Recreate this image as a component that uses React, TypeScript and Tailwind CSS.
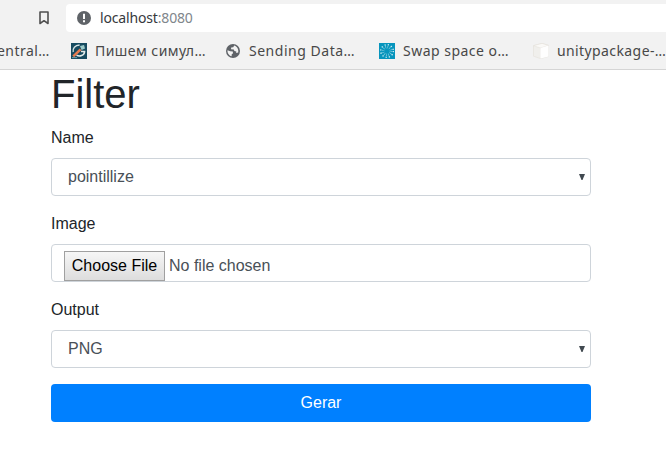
import React from 'react';

const GlobeIcon = () => (
  <svg width="14" height="14" viewBox="0 0 14 14">
    <circle cx="7" cy="7" r="7" fill="#5f6368" />
    <path d="M8.3 1.5 L7.2 3.2 L5.2 3.6 L5 5.2 L7.8 5.4 L8.4 7 L10.3 7.4 L10.2 9 L12.2 8.6 C12.8 6 11.6 2.6 8.3 1.5 Z" fill="#f2f2f2" />
    <path d="M1.5 6.3 L4.2 7.2 L6.8 7.4 L7 9.4 L5.8 10 L5.6 12.3 C3 11.7 1.2 9 1.5 6.3 Z" fill="#f2f2f2" />
  </svg>
);

const ToolIcon = () => (
  <svg width="16" height="16" viewBox="0 0 16 16">
    <rect width="16" height="16" fill="#174b60" />
    <path d="M8.6 2 C4 2.2 1.4 5.4 2.2 9" fill="none" stroke="#d9e4e4" strokeWidth="1.3" />
    <path d="M5.5 12.2 C8.5 14 13.4 12.6 13.6 8.6 H10" fill="none" stroke="#e4ecea" strokeWidth="1.5" />
    <path d="M2.2 13.4 L9.6 6.4" stroke="#e77b4f" strokeWidth="2.5" />
    <path d="M9 3 L13 2 L14 5.6 L10.6 7 Z" fill="#9ccac8" />
    <path d="M1 14.6 H6" stroke="#8cb2b8" strokeWidth=".8" />
  </svg>
);

const BurstIcon = () => (
  <svg width="16" height="16" viewBox="0 0 16 16">
    <rect width="16" height="16" fill="#0795bd" />
    <g fill="none" stroke="#d8f1f7">
      <circle cx="8" cy="8" r="6.3" strokeWidth="1.3" strokeDasharray="1.2 2.1" />
      <circle cx="8" cy="8" r="3.8" strokeWidth="2.6" strokeDasharray=".6 1.39" opacity=".65" />
    </g>
  </svg>
);

const BoxIcon = () => (
  <svg width="16" height="16" viewBox="0 0 16 16">
    <path d="M.5 2.7 L9 .4 L15.5 2.4 V13.4 L7.6 15.6 L.5 13.2 Z" fill="#f0efec" stroke="#e5e2dc" strokeWidth=".7" />
    <path d="M.5 2.7 L9 .4 L15.5 2.4 L7.6 5 Z" fill="#faf9f7" stroke="#e2dfd9" strokeWidth=".5" />
    <path d="M7.6 5 L15.5 2.4 V13.4 L7.6 15.6 Z" fill="#fefefe" />
  </svg>
);

const Label = ({ children }: { children: React.ReactNode }) => (
  <div className="mb-2 h-6 leading-6">{children}</div>
);

const Select = ({ value }: { value: string }) => (
  <div className="mb-4 flex h-[38px] items-center justify-between rounded border border-[#ced4da] bg-white pl-4 pr-[5px] text-[#495057]">
    <span>{value}</span>
    <svg width="6" height="6" viewBox="0 0 6 6">
      <path d="M0 0 H6 L3.5 6 H2.5 Z" fill="#414950" />
    </svg>
  </div>
);

export default function App() {
  return (
    <div className="h-[450px] w-[666px] overflow-hidden bg-white font-['Liberation_Sans',sans-serif] text-base text-[#212529]">
      <header className="h-[70px] overflow-hidden border-b border-[#d5d5d5] bg-[#f2f2f2] pt-1 font-['Noto_Sans',sans-serif]">
        <div className="flex h-7 items-center pl-[39px]">
          <svg className="mr-[17px]" width="10" height="14" viewBox="0 0 10 14">
            <path d="M1 1 H9 V12.5 L5 9.7 L1 12.5 Z" fill="none" stroke="#505050" strokeWidth="1.6" strokeLinejoin="round" />
          </svg>
          <div className="flex h-7 flex-1 items-center rounded-l bg-white pl-[11px]">
            <svg className="mr-[9px]" width="14" height="14" viewBox="0 0 14 14">
              <circle cx="7" cy="7" r="7" fill="#5f6368" />
              <path d="M6 2.8 H8 V8 H6 Z M6 9.2 H8 V11.2 H6 Z" fill="white" />
            </svg>
            <span className="text-[14px] leading-5 tracking-[-0.16px] text-[#36393d]">
              localhost<span className="text-[#80868b]">:8080</span>
            </span>
          </div>
        </div>
        <nav className="flex h-[38px] items-center whitespace-nowrap text-[14px] leading-5 text-[#484848]">
          <span className="ml-[-3px] w-[74px] shrink-0 tracking-[0.45px]">entral…</span>
          <span className="flex w-[154px] shrink-0 items-center gap-2"><ToolIcon /><span className="tracking-[0.45px]">Пишем симул…</span></span>
          <span className="flex w-[154px] shrink-0 items-center gap-[9px] pl-px"><GlobeIcon /><span className="tracking-[0.52px]">Sending Data…</span></span>
          <span className="flex w-[154px] shrink-0 items-center gap-2"><BurstIcon /><span className="tracking-[0.48px]">Swap space o…</span></span>
          <span className="flex shrink-0 items-center gap-2"><BoxIcon /><span className="tracking-[0.4px]">unitypackage-…</span></span>
        </nav>
      </header>
      <main className="ml-[51px] w-[540px]">
        <h1 className="mb-2 h-12 text-[40px] leading-[48px]">Filter</h1>
        <Label>Name</Label>
        <Select value="pointillize" />
        <Label>Image</Label>
        <div className="mb-4 flex h-[38px] items-start gap-1 rounded border border-[#ced4da] pl-3 pt-1.5 text-[#495057]">
          <button className="h-[30px] w-[101px] whitespace-nowrap border border-[#a0a0a0] bg-linear-to-b from-[#f6f6f6] to-[#dddddd] text-black">Choose File</button>
          <span className="leading-[30px]">No file chosen</span>
        </div>
        <Label>Output</Label>
        <Select value="PNG" />
        <button className="h-[38px] w-full rounded bg-[#0080ff] text-white">Gerar</button>
      </main>
    </div>
  );
}
